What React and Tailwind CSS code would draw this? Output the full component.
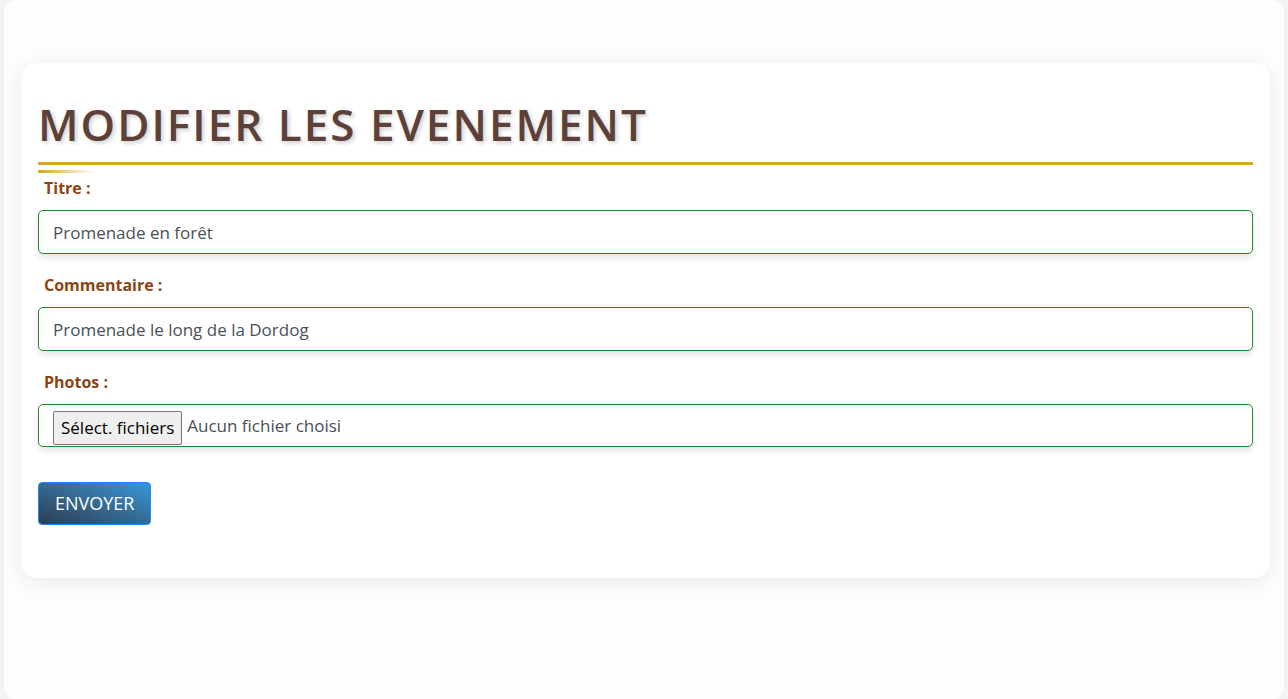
const Field = ({ label, children, first }) => (
  <div className={first ? '' : 'mt-[19px]'}>
    <label className="block pl-[6px] mb-[10px] text-[16px] leading-[24px] font-bold text-[#8b4513]">{label}</label>
    {children}
  </div>
);

const App = () => {
  return (
    <div className="min-h-[699px] bg-[#f3f3f3] px-[4px] font-['Open_Sans',sans-serif]">
      <div className="min-h-[699px] bg-[#fdfdfd] rounded-[12px] pt-[63px] pl-[17px] pr-[14px]">
        <div className="bg-white rounded-[16px] shadow-[0_4px_20px_rgba(0,0,0,0.08)] px-[17px] pt-[34px] pb-[53px]">
          <h1 className="text-[44px] leading-[55px] font-semibold tracking-[2px] text-[#5d4037] pb-[10px] border-b-[3px] border-[#daa520] [text-shadow:2px_2px_4px_rgba(0,0,0,0.2)]">
            MODIFIER LES EVENEMENT
          </h1>
          <div className="mt-[5px] h-[3px] w-[57px] bg-gradient-to-r from-[#daa520] to-transparent" />

          <form className="mt-[3px]">
            <Field label="Titre :" first>
              <input
                type="text"
                defaultValue="Promenade en forêt"
                className="w-full h-[44px] px-[14px] border border-[#228b22] rounded-[5px] text-[17px] text-[#495057] shadow-[0_4px_6px_rgba(0,0,0,0.1)] outline-none bg-white"
              />
            </Field>
            <Field label="Commentaire :">
              <input
                type="text"
                defaultValue="Promenade le long de la Dordog"
                className="w-full h-[44px] px-[14px] border border-[#228b22] rounded-[5px] text-[17px] text-[#495057] shadow-[0_4px_6px_rgba(0,0,0,0.1)] outline-none bg-white"
              />
            </Field>
            <Field label="Photos :">
              <div className="flex items-start w-full h-[43px] pl-[14px] border border-[#228b22] rounded-[5px] shadow-[0_4px_6px_rgba(0,0,0,0.1)] bg-white">
                <span className="h-[34px] mt-[6px] px-[7px] flex items-center bg-[#efefef] border border-[#767676] rounded-[2px] text-[17px] text-black">
                  Sélect. fichiers
                </span>
                <span className="ml-[5px] mt-[9px] text-[17px] leading-[24px] text-[#495057]">Aucun fichier choisi</span>
              </div>
            </Field>

            <button
              type="button"
              className="mt-[35px] h-[43px] px-[16px] rounded-[4px] border border-[#1e88ff] bg-gradient-to-tr from-[#2c3e50] to-[#3498db] text-white text-[18px]"
            >
              ENVOYER
            </button>
          </form>
        </div>
      </div>
    </div>
  );
};

export default App;
